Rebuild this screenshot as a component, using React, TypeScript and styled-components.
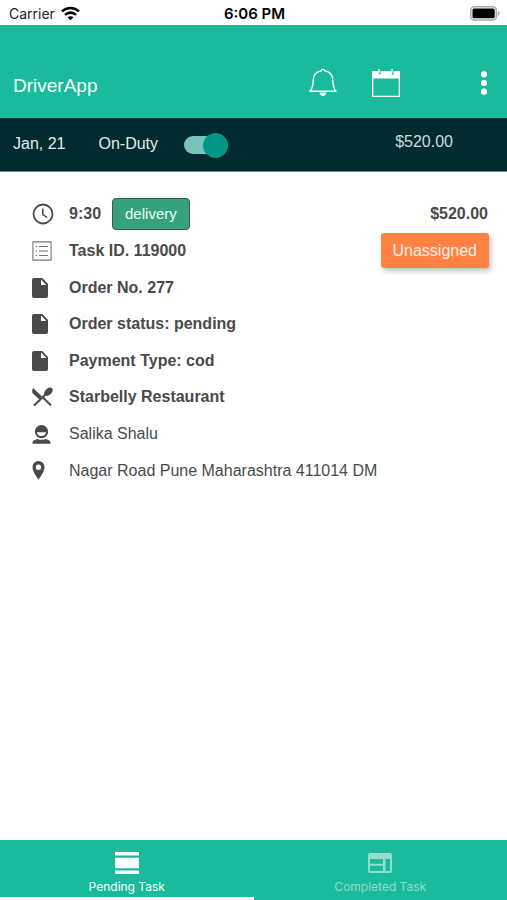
import React, { useState } from "react";
import styled, { createGlobalStyle } from "styled-components";

const GlobalStyle = createGlobalStyle`
  *, *::before, *::after { box-sizing: border-box; }
  body { margin: 0; background: #fff; font-family: "Liberation Sans", Arial, sans-serif; }
  button, input { font: inherit; margin: 0; }
`;

const teal = "#1aba9c";
const ink = "#4a4a4a";

const Screen = styled.div`
  min-height: 100vh;
  display: flex;
  flex-direction: column;
  color: ${ink};
`;

const StatusBar = styled.div`
  display: grid;
  grid-template-columns: 1fr auto 1fr;
  align-items: center;
  height: 25px;
  padding: 2px 7px 0 9px;
  color: #000;
  font: 14px/20px Inter, sans-serif;
`;

const Carrier = styled.span`
  display: flex;
  align-items: center;
  gap: 6px;
  color: #222;
`;

const Clock = styled.span`
  font-size: 15px;
  font-weight: 600;
`;

const Battery = styled.svg`
  justify-self: end;
`;

const Header = styled.header`
  display: flex;
  align-items: center;
  height: 93px;
  padding: 22px 13px 0;
  background: ${teal};
  color: #fff;
`;

const Title = styled.h1`
  flex: 1;
  margin: 0;
  padding-top: 6px;
  font-size: 19px;
  line-height: 24px;
  font-weight: 400;
`;

const IconButton = styled.button<{ $space: number }>`
  display: flex;
  padding: 0;
  margin-right: ${(p) => p.$space}px;
  border: 0;
  background: none;
  color: inherit;
  cursor: pointer;
`;

const DutyBar = styled.section`
  display: flex;
  align-items: center;
  height: 54px;
  padding: 0 54px 2px 13px;
  background: #012b2e;
  border-bottom: 1px solid #6b8587;
  color: #e3ecec;
  font-size: 16px;
  line-height: 20px;
`;

const DutyLabel = styled.label`
  display: flex;
  align-items: center;
  gap: 26px;
  margin-left: 33px;
`;

const Toggle = styled.input`
  appearance: none;
  display: flex;
  align-items: center;
  width: 44px;
  height: 18px;
  margin-top: 3px;
  border-radius: 9px;
  background: #77c4bb;
  cursor: pointer;

  &::before {
    content: "";
    width: 25px;
    height: 25px;
    border-radius: 50%;
    background: #e8e8e8;
  }

  &:checked::before {
    margin-left: auto;
    background: #009688;
  }
`;

const Earnings = styled.span`
  margin-left: auto;
  padding-bottom: 4px;
  color: #c6dde0;
`;

const TaskList = styled.main`
  display: grid;
  grid-template-rows: repeat(8, 1fr);
  min-height: 293px;
  padding: 0;
  margin: 24px 18px 0 32px;
`;

const TaskRow = styled.div`
  display: flex;
  align-items: center;
`;

const IconCell = styled.span`
  display: flex;
  flex: none;
  width: 37px;
`;

const TaskText = styled.span<{ $bold?: boolean }>`
  font-size: 16px;
  line-height: 20px;
  font-weight: ${(p) => (p.$bold ? 700 : 400)};
`;

const Price = styled(TaskText)`
  margin-left: auto;
  margin-right: 1px;
`;

const Tag = styled.span`
  margin-left: 11px;
  padding: 5px 12px;
  border: 1px solid #37594d;
  border-radius: 4px;
  background: #35a27c;
  color: #e9fff7;
  font-size: 15px;
  line-height: 20px;
`;

const AssignButton = styled.button`
  margin-left: auto;
  padding: 8px 12px;
  border: 0;
  border-radius: 3px;
  background: #ff8244;
  color: #fff0e8;
  font-size: 16px;
  line-height: 19px;
  box-shadow: 2px 3px 5px rgba(0, 0, 0, 0.25);
  cursor: pointer;
`;

const TabBar = styled.nav`
  display: grid;
  grid-template-columns: 1fr 1fr;
  margin-top: auto;
  background: ${teal};
`;

const Tab = styled.button<{ $active: boolean }>`
  display: flex;
  flex-direction: column;
  align-items: center;
  gap: 2px;
  height: 60px;
  padding: 9px 0 0;
  border: 0;
  border-bottom: 3px solid ${(p) => (p.$active ? "#fff" : "transparent")};
  background: none;
  color: ${(p) => (p.$active ? "#fff" : "#91ddce")};
  font: 12px/16px Inter, sans-serif;
  cursor: pointer;
`;

const WifiIcon = () => (
  <svg width="19" height="15" viewBox="0 0 19 15" fill="none" stroke="#000" strokeWidth="2.6">
    <path d="M1 5.4c4.9-4.6 12.100-4.600 17 0" />
    <path d="M4 8.900c3.200-3 7.800-3 11 0" />
    <path d="M6.500 11.300c1.700-1.500 4.300-1.500 6 0L9.500 14.300z" fill="#000" stroke="none" />
  </svg>
);

const BatteryIcon = () => (
  <Battery width="30" height="15" viewBox="0 0 30 15" role="img" aria-label="Battery full">
    <rect x=".8" y=".8" width="25.500" height="13.200" rx="3.500" fill="#fff" stroke="#aaa" strokeWidth="1.500" />
    <rect x="2.500" y="2.500" width="22.200" height="9.800" rx="1.500" fill="#000" />
    <path d="M27.700 5v5c1.500-.6 2-1.500 2-2.500s-.5-1.900-2-2.500z" fill="#aaa" />
  </Battery>
);

const BellIcon = () => (
  <svg width="28" height="30" viewBox="0 0 28 30" fill="none" stroke="currentColor" strokeWidth="1.400">
    <path d="M12.200 2.900C12.200.8 15.800.8 15.800 2.900c5.200.9 7.700 4.300 7.900 8.800.2 5.600.8 8.800 3.300 11.500H1c2.500-2.700 3.100-5.900 3.300-11.500.2-4.500 2.700-7.900 7.900-8.800z" strokeLinejoin="round" />
    <path d="M10.500 24.500h7c-.4 2.300-1.600 3.500-3.500 3.500s-3.100-1.200-3.500-3.500z" fill="currentColor" stroke="none" />
  </svg>
);

const CalendarIcon = () => (
  <svg width="28" height="28" viewBox="0 0 28 28" fill="none" stroke="currentColor" strokeWidth="1.300">
    <path d="M.7 3h26.600v24.300H.7z" />
    <path d="M0 2h28v7.500H0z" fill="currentColor" stroke="none" />
    <path d="M7.700 1.500v4M20.700 1.500v4" stroke={teal} strokeWidth="1.800" />
    <path d="M7 0v4M20 0v4" />
  </svg>
);

const MoreIcon = () => (
  <svg width="8" height="24" viewBox="0 0 8 24" fill="currentColor">
    <circle cx="4" cy="3.300" r="3.100" />
    <circle cx="4" cy="12" r="3.100" />
    <circle cx="4" cy="20.700" r="3.100" />
  </svg>
);

const ClockIcon = () => (
  <svg width="22" height="22" viewBox="0 0 22 22" fill="none" stroke={ink} strokeWidth="1.800">
    <circle cx="11" cy="11" r="9.500" />
    <path d="M10.800 5.500v6l4.400 3" strokeWidth="1.500" />
  </svg>
);

const ListIcon = () => (
  <svg width="20" height="20" viewBox="0 0 20 20" fill="none" stroke="#777" strokeWidth="1">
    <path d="M.9.9h18.200v18.200H.9z" strokeWidth="1.100" />
    <path d="M7 5.500h9M7 10h9M7 14.500h9M3.700 5.500h1.500M3.700 10h1.500M3.700 14.500h1.500" />
  </svg>
);

const FileIcon = () => (
  <svg width="16" height="20" viewBox="0 0 16 20" fill={ink}>
    <path d="M2 0h8.300L16 6v12a2 2 0 0 1-2 2H2a2 2 0 0 1-2-2V2a2 2 0 0 1 2-2zm7 1.600V7h5.300z" fillRule="evenodd" />
  </svg>
);

const CutleryIcon = () => (
  <svg width="22" height="20" viewBox="0 0 22 20" fill={ink}>
    <path d="M1.100 1.100 10 9.500 7.100 12.300 1.500 7.100C-.2 5.400-.3 3 1.100 1.100z" />
    <path d="M12.500 9c-1.200-2.400.2-5.400 2.500-7.200 1.900-1.500 3.800-1.700 5-.6s.9 3-.5 4.800c-1.800 2.200-4.600 3.600-7 2.500z" />
    <path d="m13 8-11 10.500M11 10.500l8 8" stroke={ink} strokeWidth="2" fill="none" />
  </svg>
);

const PersonIcon = () => (
  <svg width="19" height="19" viewBox="0 0 19 19">
    <circle cx="9.500" cy="6.700" r="6.600" fill={ink} />
    <path d="M5 7.200h9a4.500 3.900 0 0 1-9 0z" fill="#fff" />
    <path d="M.5 18.700v-1.200c0-1.900 2.700-3.100 5-3.600 2.400 1.200 5.600 1.200 8 0 2.300.5 5 1.700 5 3.600v1.200z" fill={ink} />
  </svg>
);

const PinIcon = () => (
  <svg width="13" height="19" viewBox="0 0 13 19" fill={ink}>
    <path d="M6.500 0A6 6 0 0 0 .5 6.200c0 4.800 6 12.300 6 12.300s6-7.500 6-12.300A6 6 0 0 0 6.500 0zm0 8.900a2.700 2.700 0 1 1 0-5.400 2.700 2.700 0 0 1 0 5.400z" fillRule="evenodd" />
  </svg>
);

const DayIcon = () => (
  <svg width="24" height="28" viewBox="0 0 24 28" fill="currentColor">
    <path d="M0 3h24v3.500H0zM0 8.800h24v10.400H0zM0 21.500h24V25H0z" />
  </svg>
);

const WebIcon = () => (
  <svg width="24" height="28" viewBox="0 0 24 28" fill="currentColor">
    <path d="M2 4h20q2 0 2 2v16q0 2-2 2H2q-2 0-2-2V6q0-2 2-2zm0 6v4.700h13V10zm0 6.700V22h13v-5.300zM17.500 10v12H22V10z" fillRule="evenodd" />
  </svg>
);

const details = [
  { icon: <FileIcon />, text: "Order No. 277", bold: true },
  { icon: <FileIcon />, text: "Order status: pending", bold: true },
  { icon: <FileIcon />, text: "Payment Type: cod", bold: true },
  { icon: <CutleryIcon />, text: "Starbelly Restaurant", bold: true },
  { icon: <PersonIcon />, text: "Salika Shalu", bold: false },
  { icon: <PinIcon />, text: "Nagar Road Pune Maharashtra 411014 DM", bold: false },
];

export default function App() {
  const [onDuty, setOnDuty] = useState(true);
  const [tab, setTab] = useState("pending");

  return (
    <Screen>
      <GlobalStyle />
      <StatusBar>
        <Carrier>Carrier <WifiIcon /></Carrier>
        <Clock>6:06 PM</Clock>
        <BatteryIcon />
      </StatusBar>
      <Header>
        <Title>DriverApp</Title>
        <IconButton $space={35} aria-label="Notifications"><BellIcon /></IconButton>
        <IconButton $space={80} aria-label="Calendar"><CalendarIcon /></IconButton>
        <IconButton $space={6} aria-label="More options"><MoreIcon /></IconButton>
      </Header>
      <DutyBar>
        <span>Jan, 21</span>
        <DutyLabel>
          On-Duty
          <Toggle type="checkbox" role="switch" checked={onDuty} onChange={(e) => setOnDuty(e.target.checked)} />
        </DutyLabel>
        <Earnings>$520.00</Earnings>
      </DutyBar>
      <TaskList>
        <TaskRow>
          <IconCell><ClockIcon /></IconCell>
          <TaskText $bold>9:30</TaskText>
          <Tag>delivery</Tag>
          <Price $bold>$520.00</Price>
        </TaskRow>
        <TaskRow>
          <IconCell><ListIcon /></IconCell>
          <TaskText $bold>Task ID. 119000</TaskText>
          <AssignButton>Unassigned</AssignButton>
        </TaskRow>
        {details.map((d) => (
          <TaskRow key={d.text}>
            <IconCell>{d.icon}</IconCell>
            <TaskText $bold={d.bold}>{d.text}</TaskText>
          </TaskRow>
        ))}
      </TaskList>
      <TabBar>
        <Tab $active={tab === "pending"} onClick={() => setTab("pending")}>
          <DayIcon />
          Pending Task
        </Tab>
        <Tab $active={tab === "completed"} onClick={() => setTab("completed")}>
          <WebIcon />
          Completed Task
        </Tab>
      </TabBar>
    </Screen>
  );
}
